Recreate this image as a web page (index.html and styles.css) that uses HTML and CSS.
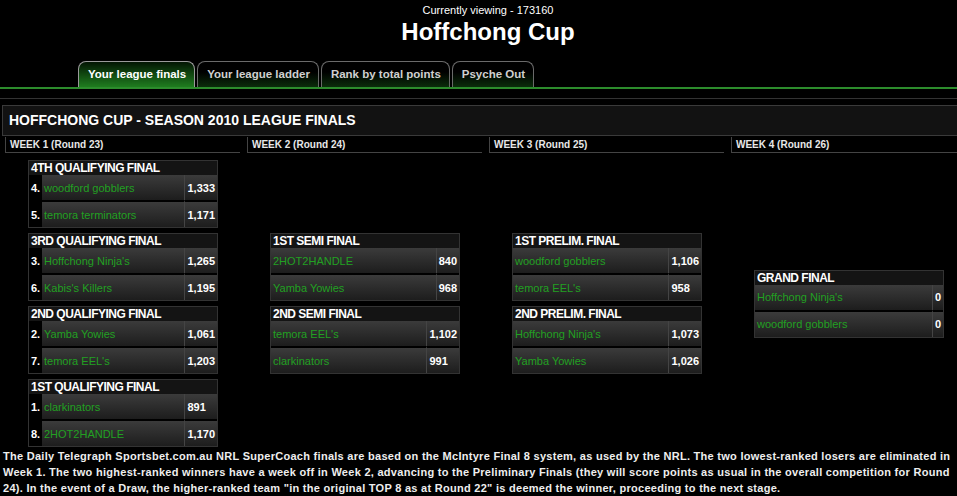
FILE: index.html
```html
<!DOCTYPE html>
<html lang="en">
<head>
    <meta charset="UTF-8">
    <title>Hoffchong Cup - League finals</title>
    <link rel="stylesheet" href="styles.css">
</head>
<body>
<div class="page">
    <!-- En-tete -->
    <div class="top">
        <div class="viewing">Currently viewing - 173160</div>
        <h1>Hoffchong Cup</h1>
    </div>

    <!-- Onglets -->
    <div class="tabs">
        <a href="#" class="tab active">Your league finals</a>
        <a href="#" class="tab">Your league ladder</a>
        <a href="#" class="tab">Rank by total points</a>
        <a href="#" class="tab">Psyche Out</a>
    </div>

    <div class="content">
        <div class="panel-head">HOFFCHONG CUP - SEASON 2010 LEAGUE FINALS</div>

        <div class="bracket">
            <div class="week-label">WEEK 1 (Round 23)</div>
            <div class="week-label">WEEK 2 (Round 24)</div>
            <div class="week-label">WEEK 3 (Round 25)</div>
            <div class="week-label">WEEK 4 (Round 26)</div>

            <!-- Semaine 1 -->
            <div class="week">
                <table class="match">
                    <tr><th colspan="3">4TH QUALIFYING FINAL</th></tr>
                    <tr><td class="seed">4.</td><td class="team">woodford gobblers</td><td class="score">1,333</td></tr>
                    <tr class="second"><td class="seed">5.</td><td class="team">temora terminators</td><td class="score">1,171</td></tr>
                </table>
                <table class="match">
                    <tr><th colspan="3">3RD QUALIFYING FINAL</th></tr>
                    <tr><td class="seed">3.</td><td class="team">Hoffchong Ninja's</td><td class="score">1,265</td></tr>
                    <tr class="second"><td class="seed">6.</td><td class="team">Kabis's Killers</td><td class="score">1,195</td></tr>
                </table>
                <table class="match">
                    <tr><th colspan="3">2ND QUALIFYING FINAL</th></tr>
                    <tr><td class="seed">2.</td><td class="team">Yamba Yowies</td><td class="score">1,061</td></tr>
                    <tr class="second"><td class="seed">7.</td><td class="team">temora EEL's</td><td class="score">1,203</td></tr>
                </table>
                <table class="match">
                    <tr><th colspan="3">1ST QUALIFYING FINAL</th></tr>
                    <tr><td class="seed">1.</td><td class="team">clarkinators</td><td class="score">891</td></tr>
                    <tr class="second"><td class="seed">8.</td><td class="team">2HOT2HANDLE</td><td class="score">1,170</td></tr>
                </table>
            </div>

            <!-- Semaine 2 -->
            <div class="week">
                <table class="match">
                    <tr><th colspan="2">1ST SEMI FINAL</th></tr>
                    <tr><td class="team">2HOT2HANDLE</td><td class="score">840</td></tr>
                    <tr class="second"><td class="team">Yamba Yowies</td><td class="score">968</td></tr>
                </table>
                <table class="match">
                    <tr><th colspan="2">2ND SEMI FINAL</th></tr>
                    <tr><td class="team">temora EEL's</td><td class="score">1,102</td></tr>
                    <tr class="second"><td class="team">clarkinators</td><td class="score">991</td></tr>
                </table>
            </div>

            <!-- Semaine 3 -->
            <div class="week">
                <table class="match">
                    <tr><th colspan="2">1ST PRELIM. FINAL</th></tr>
                    <tr><td class="team">woodford gobblers</td><td class="score">1,106</td></tr>
                    <tr class="second"><td class="team">temora EEL's</td><td class="score">958</td></tr>
                </table>
                <table class="match">
                    <tr><th colspan="2">2ND PRELIM. FINAL</th></tr>
                    <tr><td class="team">Hoffchong Ninja's</td><td class="score">1,073</td></tr>
                    <tr class="second"><td class="team">Yamba Yowies</td><td class="score">1,026</td></tr>
                </table>
            </div>

            <!-- Semaine 4 -->
            <div class="week">
                <table class="match">
                    <tr><th colspan="2">GRAND FINAL</th></tr>
                    <tr><td class="team">Hoffchong Ninja's</td><td class="score">0</td></tr>
                    <tr class="second"><td class="team">woodford gobblers</td><td class="score">0</td></tr>
                </table>
            </div>
        </div>

        <p class="notes">The Daily Telegraph Sportsbet.com.au NRL SuperCoach finals are based on the McIntyre Final 8 system, as used by the NRL. The two lowest-ranked losers are eliminated in Week 1. The two highest-ranked winners have a week off in Week 2, advancing to the Preliminary Finals (they will score points as usual in the overall competition for Round 24). In the event of a Draw, the higher-ranked team "in the original TOP 8 as at Round 22" is deemed the winner, proceeding to the next stage.</p>
    </div>
</div>
</body>
</html>
```

FILE: styles.css
```css
/* Style global */
html, body {
    margin: 0;
    background-color: #000;
    overflow: hidden;
}

body {
    font-family: 'Liberation Sans', Arial, sans-serif;
    color: #fff;
}

.page {
    width: 976px;
}

/* En-tete */
.top {
    text-align: center;
    padding-top: 4px;
}

.viewing {
    font-size: 11px;
    line-height: 13px;
}

.top h1 {
    margin: 1px 0 0;
    font-size: 24px;
    line-height: 28px;
    font-weight: bold;
}

/* Onglets */
.tabs {
    display: flex;
    gap: 2px;
    margin-top: 15px;
    padding-left: 78px;
    border-bottom: 2px solid #2c8c2c;
}

.tab {
    display: block;
    height: 25px;
    line-height: 25px;
    padding: 0 8px 0 9px;
    border: 1px solid #6a6a6a;
    border-bottom: none;
    border-radius: 8px 8px 0 0;
    background: linear-gradient(#000 40%, #0b2c0b);
    color: #d0d0d0;
    font-size: 11.5px;
    font-weight: bold;
    text-decoration: none;
}

.tab.active {
    border-color: #9a9a9a;
    background: linear-gradient(#031503, #1f7d1f);
    color: #fff;
}

/* Contenu */
.content {
    margin-top: 9px;
    border-top: 1px solid #333;
    padding-top: 6px;
}

.panel-head {
    margin-left: 2px;
    height: 29px;
    line-height: 29px;
    padding-left: 6px;
    border: 1px solid #3a3a3a;
    background-color: #121212;
    font-size: 14px;
    font-weight: bold;
}

.bracket {
    display: grid;
    grid-template-columns: repeat(4, 235px);
    column-gap: 7px;
    padding-left: 5px;
}

.week-label {
    margin-top: 1px;
    height: 15px;
    line-height: 16px;
    padding-left: 4px;
    border-left: 1px solid #444;
    border-bottom: 1px solid #444;
    color: #e8e8e8;
    font-size: 10px;
    font-weight: bold;
}

.week {
    display: flex;
    flex-direction: column;
    justify-content: center;
    gap: 5px;
    padding: 7px 0 0 23px;
}

/* Matchs */
.match {
    width: 190px;
    border-collapse: separate;
    border-spacing: 0;
    border: 1px solid #333;
    background-color: #000;
}

.match th {
    height: 14px;
    padding: 0 0 0 2px;
    background-color: #141414;
    text-align: left;
    font-size: 12px;
    line-height: 14px;
    letter-spacing: -0.5px;
    font-weight: bold;
}

.match td {
    height: 25px;
    padding: 0;
    background: linear-gradient(#3b3b3b, #1d1d1d);
    font-size: 11px;
    white-space: nowrap;
}

.match .second td {
    border-top: 2px solid #000;
}

.match td.seed {
    width: 11px;
    padding-left: 2px;
    background: #000;
    font-weight: bold;
}

.match td.team {
    padding-left: 2px;
    color: #22a022;
}

.match td.score {
    width: 1px;
    padding: 0 2px 0 2px;
    border-left: 1px solid #444;
    font-weight: bold;
}

/* Texte explicatif */
.notes {
    margin: 1px 0 0 3px;
    width: 952px;
    font-size: 11px;
    line-height: 16px;
    letter-spacing: 0.28px;
    font-weight: bold;
    color: #eee;
}
```
